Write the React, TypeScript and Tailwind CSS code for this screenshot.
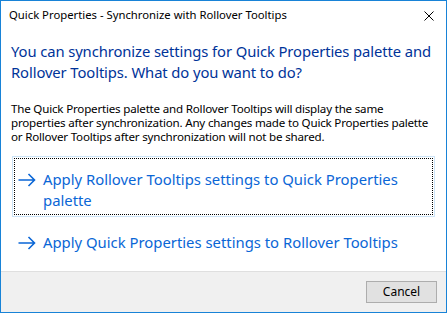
const font = { fontFamily: '"Noto Sans", "Open Sans", sans-serif' };

function Arrow() {
  return (
    <svg width="18" height="14" viewBox="0 0 18 14" className="shrink-0">
      <path d="M0.5 7H16.5M10.5 1L16.5 7L10.5 13" fill="none" stroke="#0a66d6" strokeWidth="1.6" />
    </svg>
  );
}

export default function App() {
  return (
    <div
      className="w-[447px] h-[313px] border border-[#1883d7] bg-white flex flex-col overflow-hidden"
      style={font}
    >
      <div className="h-[29px] flex items-center justify-between pl-2 pr-[12px] shrink-0">
        <span className="text-[11.3px] text-black">Quick Properties - Synchronize with Rollover Tooltips</span>
        <svg width="10" height="10" viewBox="0 0 10 10">
          <path d="M0.5 0.5L9.5 9.5M9.5 0.5L0.5 9.5" stroke="#000" strokeWidth="1" />
        </svg>
      </div>

      <div className="pl-[10px] pt-[11px] whitespace-nowrap">
        <h1 className="text-[14.8px] leading-[21px] tracking-[-0.1px] text-[#003399] font-normal">
          You can synchronize settings for Quick Properties palette and
          <br />
          Rollover Tooltips. What do you want to do?
        </h1>
        <p className="mt-[19px] text-[11.6px] leading-[14px] tracking-[-0.2px] text-black">
          The Quick Properties palette and Rollover Tooltips will display the same
          <br />
          properties after synchronization. Any changes made to Quick Properties palette
          <br />
          or Rollover Tooltips after synchronization will not be shared.
        </p>
      </div>

      <div className="px-[11px] mt-[12px] flex flex-col gap-[2px]">
        <div className="border border-[#cce4f7] p-px">
          <div className="border border-dotted border-black flex items-start gap-[7px] pl-[3px] pt-[10px] pb-[3px] pr-4">
            <div className="h-[21px] flex items-center">
              <Arrow />
            </div>
            <span className="text-[14.85px] leading-[21px] text-[#0a66d6]">
              Apply Rollover Tooltips settings to Quick Properties
              <br />
              palette
            </span>
          </div>
        </div>
        <div className="border border-transparent p-px">
          <div className="border border-transparent flex items-start gap-[7px] pl-[3px] pt-[10px] pb-[3px] pr-4">
            <div className="h-[21px] flex items-center">
              <Arrow />
            </div>
            <span className="text-[14.85px] leading-[21px] text-[#0a66d6]">
              Apply Quick Properties settings to Rollover Tooltips
            </span>
          </div>
        </div>
      </div>

      <div className="flex-1" />

      <div className="h-[41px] shrink-0 bg-[#f0f0f0] border-t border-[#dfdfdf] flex items-center justify-end pr-[9px]">
        <button className="w-[71px] h-[22px] bg-[#e1e1e1] border border-[#adadad] text-[12px] text-black">
          Cancel
        </button>
      </div>
    </div>
  );
}
